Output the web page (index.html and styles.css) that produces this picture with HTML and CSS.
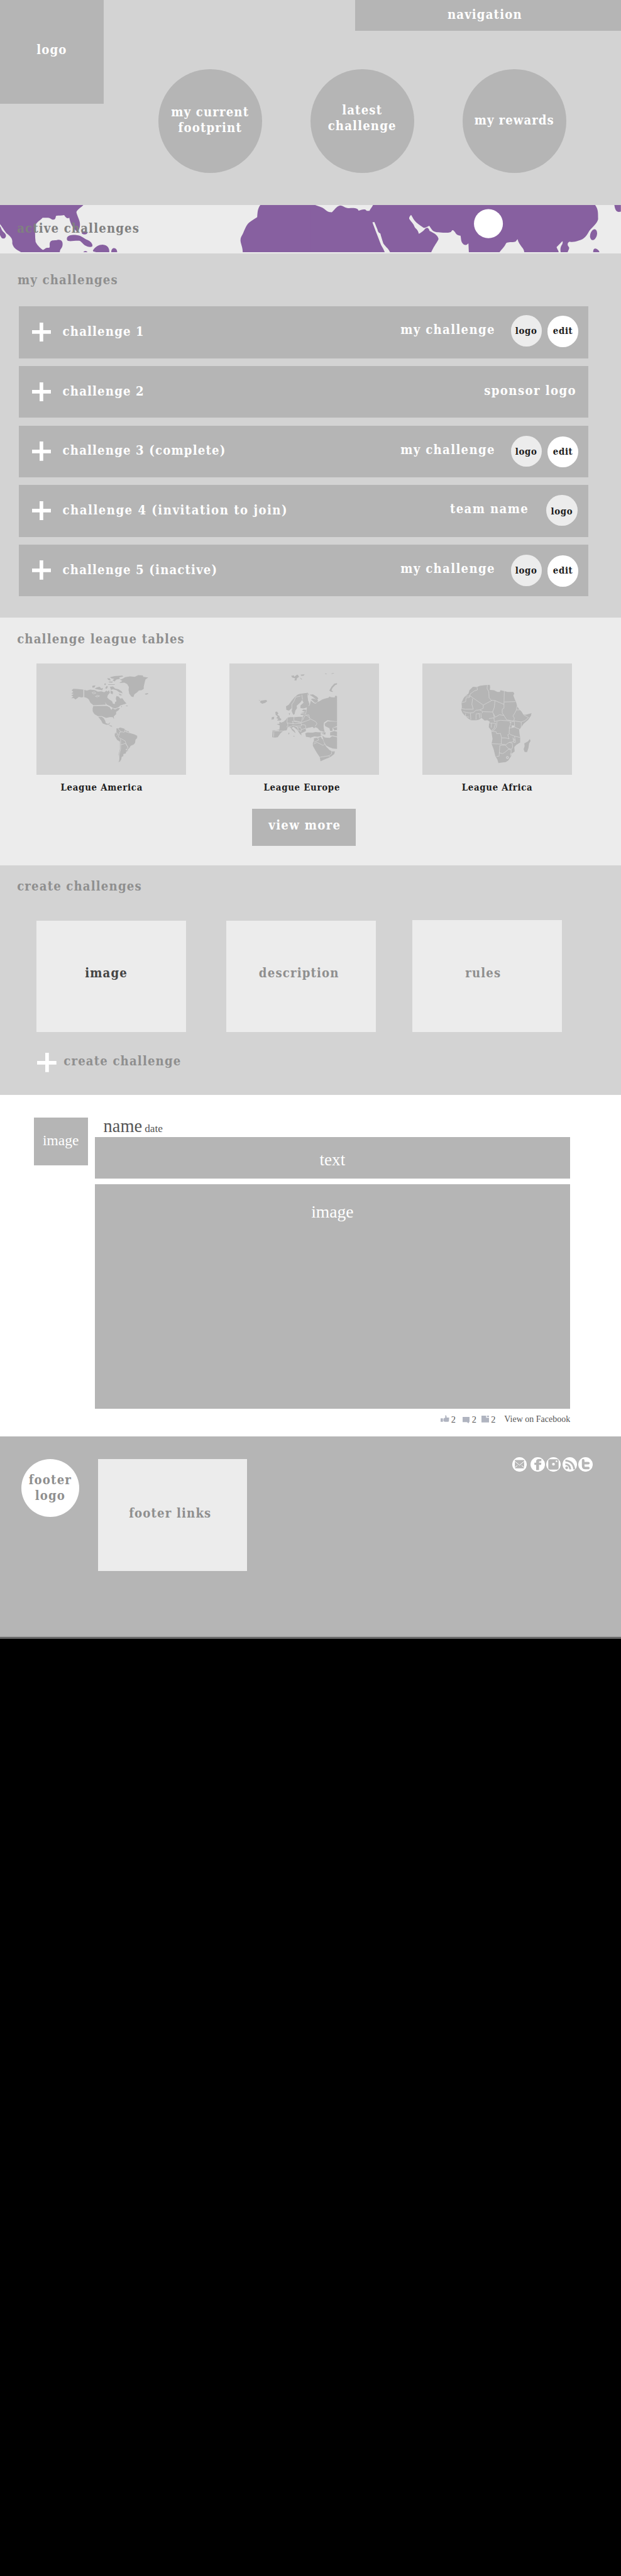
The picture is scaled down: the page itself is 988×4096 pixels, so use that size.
FILE: index.html
```html
<!DOCTYPE html>
<html lang="en">
<head>
<meta charset="utf-8">
<title>my challenges</title>
<link rel="stylesheet" href="styles.css">
</head>
<body>
<header class="hero">
  <div class="hero-top">
    <div class="logo">logo</div>
    <nav class="nav">navigation</nav>
  </div>
  <div class="circles">
    <div class="circle">my current<br>footprint</div>
    <div class="circle up">latest<br>challenge</div>
    <div class="circle tight">my rewards</div>
  </div>
</header>

<section class="band">
  <svg class="world" viewBox="0 0 1200 94" preserveAspectRatio="none">
    <g fill="#8760a0">
      <g transform="scale(.38265 .33333) translate(0 -48)">
        <path d="M0,48L421,48C410,62 387,76 386,90C388,108 404,135 404,160C404,185 395,205 385,198C370,185 354,155 350,122C340,128 333,122 324,106C312,110 295,107 283,111C280,122 281,132 270,133C258,134 255,122 243,122L215,122C208,135 178,148 177,175C178,200 176,230 180,262C190,285 208,302 216,308C224,308 230,294 240,296C256,298 250,288 251,270C256,245 272,256 290,250C312,246 318,262 316,280C314,300 303,300 302,321L106,321C85,306 68,300 62,270C65,240 52,230 32,211C22,195 8,170 0,158Z"/>
        <path d="M0,170C6,178 6,190 14,200C22,210 31,215 30,228C28,240 20,244 14,242C6,240 4,230 0,222Z"/>
        <path d="M338,240C340,222 370,220 385,222C415,225 425,245 445,252C462,262 470,278 466,288C455,296 440,288 428,281C415,270 408,256 400,255C385,253 365,258 350,257C340,256 336,250 338,240Z"/>
        <path d="M470,310C482,290 500,278 518,278C545,280 553,300 552,321L486,321C478,318 466,318 470,310ZM562,321C562,304 570,298 576,298C586,298 592,310 592,321ZM421,321C425,313 438,313 442,321Z"/>
        <ellipse cx="427" cy="209" rx="14" ry="9"/>
        <path d="M1572,48L1315,48C1300,70 1301,95 1299,118C1285,130 1258,145 1250,160C1238,178 1230,210 1224,220C1218,232 1214,240 1215,258C1218,280 1226,295 1226,321L1572,321Z"/>
      </g>
      <g transform="translate(600 0) scale(.38265 .33333) translate(0 -48)">
        <path d="M0,48L24,48C40,55 60,60 75,75C88,90 100,88 108,90C120,80 130,55 150,51C168,52 175,68 195,66C220,64 240,64 243,81C255,76 278,66 284,82L298,82C303,70 312,58 316,48L1438,48C1455,75 1452,95 1453,130C1448,155 1425,175 1408,198C1395,225 1385,245 1355,254C1335,262 1320,264 1309,260C1296,264 1297,285 1305,290C1310,300 1303,308 1299,321L1264,321C1260,300 1265,285 1272,275C1276,262 1274,256 1270,260L1243,292C1246,302 1252,310 1254,321L1080,321C1078,295 1055,285 1046,246C1040,252 1040,262 1028,262C1010,264 993,262 988,270C980,290 965,305 955,321L800,321L798,270C790,278 785,282 775,278C758,262 762,245 758,226C740,224 735,215 730,205C724,196 718,188 712,200C708,210 690,208 670,208C645,206 628,208 617,196C610,185 604,175 600,168C592,172 580,182 572,180C550,164 528,145 520,128C514,115 511,108 508,105C502,112 497,120 499,128C508,145 520,155 525,172C526,182 545,190 547,215C555,212 570,200 580,185C590,175 597,180 602,198C625,210 645,225 647,245C642,262 635,265 610,321L402,321C395,300 375,285 368,270C362,250 357,230 353,213C340,205 340,195 338,188C330,165 326,155 323,146L313,148C320,170 340,230 357,280C365,295 370,305 375,321L0,321Z"/>
        <ellipse cx="1430" cy="220" rx="17" ry="32" transform="rotate(12 1430 220)"/>
        <path d="M1428,321C1428,300 1436,298 1445,302C1455,308 1458,315 1460,321ZM1535,48C1538,75 1545,88 1558,88L1568,86V48Z"/>
      </g>
    </g>
    <circle cx="944" cy="36" r="28" fill="#fff"/>
  </svg>
  <h2 class="heading band-title">active challenges</h2>
</section>

<section class="mine">
  <h2 class="heading">my challenges</h2>
  <div class="rows">
    <div class="row r1">
      <i class="plus"></i><span class="name">challenge 1</span>
      <span class="owner">my challenge</span><b class="dot">logo</b><b class="dot edit">edit</b>
    </div>
    <div class="row r2">
      <i class="plus"></i><span class="name">challenge 2</span>
      <span class="sponsor">sponsor logo</span>
    </div>
    <div class="row r3">
      <i class="plus"></i><span class="name">challenge 3 (complete)</span>
      <span class="owner">my challenge</span><b class="dot">logo</b><b class="dot edit">edit</b>
    </div>
    <div class="row r4">
      <i class="plus"></i><span class="name">challenge 4 (invitation to join)</span>
      <span class="team">team name</span><b class="dot">logo</b>
    </div>
    <div class="row r5">
      <i class="plus"></i><span class="name">challenge 5 (inactive)</span>
      <span class="owner">my challenge</span><b class="dot">logo</b><b class="dot edit">edit</b>
    </div>
  </div>
</section>

<section class="leagues">
  <h2 class="heading">challenge league tables</h2>
  <div class="league-grid">
    <figure class="league america">
      <svg class="map" viewBox="-180 3 867 648" preserveAspectRatio="none">
        <g fill="#b5b5b5">
          <path d="M24,158L34,150L56,151L92,154L92,198L80,200L66,196L54,206L46,212L36,203L22,204L34,194L22,188L36,180L22,176L34,168Z"/>
          <path d="M97,156L112,160L132,154L160,158L176,166L196,164L214,170L226,160L232,166L240,158L246,172L234,186L230,200L240,210L258,222L264,236L274,238L276,226L284,222L280,206L284,192L296,194L306,206L318,204L330,222L342,234L326,240L306,246L296,256L276,264L262,260L246,250L226,240L218,226L222,242L150,244L134,232L122,210L110,202L97,198Z"/>
          <path d="M150,249L228,249L244,256L254,272L262,262L276,270L290,262L304,262L296,274L282,284L282,296L268,310L270,326L262,314L246,314L224,318L212,314L200,308L176,308L156,296L146,280L146,262Z"/>
          <path d="M178,312L198,312L210,320L218,334L222,348L236,354L248,344L242,356L226,358L204,350L194,332Z"/>
          <path d="M318,92L334,82L362,78L390,80L410,70L436,72L440,80L468,84L452,96L446,120L442,138L442,150L430,158L414,160L404,170L388,182L382,198L370,194L358,178L354,156L356,140L346,122L330,114L300,116L318,104L304,96Z"/>
          <path d="M246,82L274,76L318,73L324,78L300,84L304,92L284,96L272,108L262,100L272,92L256,90ZM230,88L246,90L250,102L236,98ZM144,132L162,130L156,142L144,142ZM168,142L186,138L196,148L206,144L202,158L182,154L158,150ZM214,120L222,118L222,128L214,128ZM228,132L234,138L228,150L218,146ZM246,138L264,136L276,148L296,152L314,164L320,176L300,170L284,158L264,152L252,156ZM250,160L264,166L262,182L250,176ZM296,176L318,186L304,188ZM236,123H274V127H236ZM240,108L264,108L258,114L240,112ZM448,178L466,174L468,180L454,184ZM310,250L316,250L314,258ZM338,246L350,247L348,251L340,250Z"/>
          <path d="M236,356L246,362L254,362L260,370L254,368L244,364Z"/>
          <path d="M284,378L296,380L304,374L328,380L338,390L354,396L360,406L388,414L404,422L404,434L394,446L392,462L384,472L366,480L358,494L350,500L350,510L340,514L338,524L324,528L324,540L314,544L312,558L304,572L296,574L300,552L296,530L304,500L304,456L288,446L274,422L274,408L284,400Z"/>
        </g>
        <g fill="none" stroke="#d3d3d3" stroke-width="3">
          <path d="M142,172l14,-5l8,8l-14,4zM162,194l10,-6l14,3l-14,6zM274,408l12,-4l8,10l-10,6M294,382l14,14l4,6M300,402l14,-4l12,4l8,-6l26,10M304,402l-10,26l10,8l10,4l20,12l8,22l8,12l2,6M308,440v60l-8,30l-2,40M308,474l16,-4l12,-4l14,22l-10,18M338,500l12,8M334,386l-4,14M346,390l-2,12"/>
        </g>
      </svg>
      <figcaption>League America</figcaption>
    </figure>
    <figure class="league europe">
      <svg class="map" viewBox="-168 3 867 648" preserveAspectRatio="none">
        <g fill="#b5b5b5">
          <path d="M8,226L16,218L46,214L51,223L38,232L22,236ZM0,215h10v4zM190,74L206,72L208,80L220,70L228,68L236,80L224,88L220,102L208,100L214,90L196,84ZM244,68L268,66L262,74L248,74ZM240,84L254,94L248,96ZM456,117L440,120L424,138L411,160L420,166L434,168L424,158L430,144L446,128L456,124Z"/>
          <path d="M456,192L446,190L442,200L420,198L412,194L406,202L386,206L370,212L354,222L342,226L346,214L328,206L318,198L306,190L296,184L316,182L340,196L348,206L340,212L316,206L304,210L316,220L328,232L344,226L330,236L318,230L304,218L298,244L282,256L278,276L274,270L260,270L252,276L272,284L248,290L244,300L264,304L256,312L236,312L212,314L186,314L168,316L158,330L146,340L132,346L122,340L122,352L106,354L124,362L122,386L100,390L82,390L80,430L96,432L112,430L128,408L146,392L164,390L170,372L184,372L196,390L216,408L210,392L192,376L204,370L226,388L240,410L250,420L248,408L264,400L276,394L274,380L288,376L300,374L314,370L322,378L332,372L344,378L356,392L384,400L380,382L378,364L380,346L400,332L424,336L456,338Z"/>
          <path d="M160,252L176,242L192,220L210,198L232,182L252,178L284,174L292,180L286,194L290,220L296,240L286,256L262,264L244,262L244,246L262,230L254,214L244,228L222,248L224,262L214,276L210,296L202,300L194,282L192,262L178,276L162,272Z"/>
          <path d="M98,284L108,282L116,292L110,300L122,308L124,318L134,326L128,334L108,334L116,324L104,320L112,310L100,300ZM78,314L92,312L90,326L76,328ZM176,292L184,290L180,304Z"/>
          <path d="M272,408L286,402L314,404L330,400L360,402L366,422L344,428L324,426L304,432L276,428ZM322,436L348,432L362,428L374,444L384,470L394,486L414,506L430,512L444,512L440,528L416,546L386,558L360,570L356,546L336,516L316,480L316,462L322,452Z"/>
          <path d="M370,420L386,432L414,434L428,424L456,430L456,498L432,496L410,488L392,478L380,456ZM384,352L402,338L456,340L456,366L430,376L430,394L416,394L412,378L392,368L386,366ZM416,402L440,394L456,398V426L432,420L416,420ZM432,376L456,372V388L440,390ZM356,398l14,4l20,0l-2,14l-16,-4z"/>
          <path d="M174,404l6,2l-2,8l-4,-2zM200,422l12,2l-6,4zM244,432l10,2M300,432l6,2l-6,2z"/>
        </g>
        <path fill="#d3d3d3" d="M276,396L288,380L302,376L318,382L334,380L326,386L344,394L356,400L330,400L300,402L284,402Z"/>
        <path fill="none" stroke="#d3d3d3" stroke-width="3" d="M244,192L216,198L206,222L194,240L194,272M252,184L256,212M286,180L290,220M206,312L206,334L250,344L256,312M168,316L166,344L172,360L164,372M166,348L204,352L196,338L226,342L250,346L300,328M196,352L216,352L248,350L250,364L222,366L196,362M214,366L230,376L244,372L250,388L244,400M250,356L272,360L276,378L248,386M258,330L268,306L292,300L298,322L332,340L340,352L328,368M278,276L274,296L244,292M276,300L300,322M84,394L144,394M90,400L88,428M120,392L98,390M170,372L194,366M226,370L232,392L250,394M340,430L350,446L322,460M320,470L340,460L376,478L384,470M346,428L350,436M362,424L370,440M358,546L408,538L424,528L426,508L436,500M408,538L416,546M366,402L362,420M360,402L378,410"/>
        <path fill="none" stroke="#b5b5b5" stroke-width="3" d="M222,188l22,-8l20,-2l24,-4M386,62l10,1M424,62l14,-3"/>
      </svg>
      <figcaption>League Europe</figcaption>
    </figure>
    <figure class="league africa">
      <svg class="map" viewBox="-129 3 867 648" preserveAspectRatio="none">
        <path fill="#b5b5b5" d="M164,138L186,140L204,132L230,129L262,127L264,140L262,156L286,158L306,168L320,168L324,158L344,162L366,168L398,168L404,178L398,188L410,218L416,232L420,250L432,268L446,282L456,298L470,300L504,291L500,306L484,330L458,352L444,372L432,388L434,408L438,432L438,460L414,476L404,488L406,512L390,524L386,540L368,566L354,574L312,580L306,560L294,540L284,500L272,468L278,440L272,404L270,390L256,372L258,348L262,340L248,332L232,334L214,318L200,328L184,332L152,332L134,320L116,304L104,290L96,272L100,256L98,230L110,204L120,192L138,178L144,158Z"/>
        <path fill="#b5b5b5" d="M494,440L498,452L490,466L486,492L478,516L464,516L458,500L464,482L462,466L484,454Z"/>
        <path fill="none" stroke="#d3d3d3" stroke-width="3" d="M188,140L190,156L172,162L148,180L146,192L120,192M146,192L144,200L124,202L122,224L98,230M144,188L224,244L272,218L258,202L256,166L246,148L248,128M162,206L158,240L166,268L120,268L98,264M224,244L224,262L204,272L182,274L166,288L142,290L108,282M204,272L222,282L278,284L288,258L292,218L272,216M292,218L344,240L346,162M346,226L410,224M344,240L344,262L334,268L334,290L344,304L318,300L294,314L284,296L278,284M344,304L360,330L402,336L404,318L396,308L408,288L416,272L436,272M416,272L420,250M458,300L486,316L466,334L444,342L404,336M444,342L444,372L440,386L406,372L404,338M286,318L288,340L304,336L324,332L380,336L384,350L376,372L374,408L384,416L406,424L438,432M256,348L296,350L286,380L272,392M304,340L300,372L284,392L272,396L298,398L302,410L324,408L330,434L352,434L374,440L366,416L374,412M330,434L328,470L272,468M328,470L354,474L374,460L392,458L408,446L406,424M396,432L402,462L410,460L410,446L398,440M350,474L370,496L388,500L394,488L392,464L374,460M350,476L320,478L316,540L300,542M316,520L336,526L352,516L370,500L386,504L384,540M272,348L270,374M182,300L182,328M200,294L204,320M210,290L212,316M218,290L220,282M150,292L152,330M122,292L120,310L142,314M180,296L204,292M284,296L288,318L258,322M376,346L392,340L404,338M372,376l14,0l18,-6"/>
        <path fill="#d3d3d3" d="M388,362l14,0l2,10l-14,4z"/>
        <circle cx="364" cy="548" r="6" fill="none" stroke="#e4e4e4" stroke-width="3"/>
        <circle cx="385" cy="528" r="4" fill="none" stroke="#d3d3d3" stroke-width="3"/>
      </svg>
      <figcaption>League Africa</figcaption>
    </figure>
  </div>
  <button class="more">view more</button>
</section>

<section class="create">
  <h2 class="heading">create challenges</h2>
  <div class="create-grid">
    <div class="panel dark">image</div>
    <div class="panel desc">description</div>
    <div class="panel rules">rules</div>
  </div>
  <div class="create-link"><i class="plus"></i><span>create challenge</span></div>
</section>

<section class="feed">
  <div class="avatar">image</div>
  <article class="post">
    <div class="byline"><span class="author">name</span><span class="date">date</span></div>
    <div class="post-text">text</div>
    <div class="post-image">image</div>
    <div class="post-meta">
      <svg class="like" viewBox="0 0 17 14"><path fill="#b0b4c0" d="M0 6.5h4.5V13H0zM5.5 7L9 5V1.5Q9-.5 10.500 .5Q12 2 11.500 5H16.500L16 12.500L14 13H8L5.500 12z"/></svg><span class="n1">2</span>
      <svg class="talk" viewBox="0 0 14 13"><path fill="#b0b4c0" d="M0 0h14v10h-2v3L8.500 10H0z"/></svg><span class="n2">2</span>
      <svg class="share" viewBox="0 0 15 13"><path fill="#b0b4c0" d="M0 0h9v4h6v9H0zM10.500 0H15v2.500h-4.500z"/></svg><span class="n3">2</span>
      <a class="fb">View on Facebook</a>
    </div>
  </article>
</section>

<footer class="footer">
  <div class="footer-logo">footer<br>logo</div>
  <div class="footer-links">footer links</div>
  <div class="social">
    <svg viewBox="0 0 28 28"><circle cx="14" cy="14" r="14" fill="#fff"/><rect x="5" y="5.500" width="18" height="16" rx="1" fill="#b5b5b5"/><path d="M5 8l9 7.500L23 8M5 20l5-4M23 20l-5-4" fill="none" stroke="#fff" stroke-width="1.200"/></svg>
    <svg viewBox="0 0 28 28"><circle cx="14" cy="14" r="14" fill="#fff"/><path fill="#b5b5b5" d="M11 25V15H7.500v-4.500H11V8q0-4.500 5-4.500h5V8h-3q-1.500 0-1.500 1.500v1H21L20.500 15h-4v10z"/></svg>
    <svg viewBox="0 0 28 28"><circle cx="14" cy="14" r="14" fill="#fff"/><rect x="4" y="4" width="20" height="20" rx="3.500" fill="#b5b5b5"/><circle cx="14" cy="13.500" r="2.700" fill="#fff"/><rect x="18.500" y="6.500" width="3" height="3" rx=".5" fill="#fff"/></svg>
    <svg viewBox="0 0 28 28"><circle cx="14" cy="14" r="14" fill="#fff"/><circle cx="8" cy="20.500" r="2.700" fill="#b5b5b5"/><path fill="none" stroke="#b5b5b5" stroke-width="3.600" d="M5.500 13.500Q14.500 14 15 23.500M5.500 6.500Q21.500 8 22.500 23.500"/></svg>
    <svg viewBox="0 0 28 28"><circle cx="14" cy="14" r="14" fill="#fff"/><path fill="none" stroke="#b5b5b5" stroke-width="5" stroke-linecap="round" stroke-linejoin="round" d="M9.500 6v11q0 4 4 4h6M10 11.500h9.500"/></svg>
  </div>
</footer>
<div class="rule"></div>
</body>
</html>
```
FILE: styles.css
```css
/* 1rem stands for ten design pixels */
html { font-size: 8.232px; background: #000; }
* { box-sizing: border-box; }
body {
  margin: 0;
  width: 120rem;
  color: #fff;
  font: bold 2.45rem/3rem "DejaVu Serif Condensed", "DejaVu Serif", serif;
  font-stretch: condensed;
  letter-spacing: .14rem;
  white-space: nowrap;
}
h2, figure { margin: 0; }
svg { display: block; }

.heading { font-size: inherit; line-height: 3rem; color: #8f8f8f; }

/* header */
.hero { height: 39.6rem; background: #d3d3d3; }
.hero-top { display: flex; justify-content: space-between; height: 13.4rem; }
.logo { width: 20rem; height: 20rem; padding-top: 8.16rem; background: #b5b5b5; text-align: center; }
.nav { width: 51.4rem; height: 6rem; padding: 1.36rem 1.2rem 0 0; background: #b5b5b5; text-align: center; }
.circles { display: flex; gap: 9.4rem; padding-left: 30.6rem; }
.circle { width: 20rem; height: 20rem; padding-top: 6.76rem; border-radius: 50%; background: #b5b5b5; text-align: center; }
.circle.up { padding-top: 6.46rem; }
.circle.tight { padding-top: 8.36rem; letter-spacing: .12rem; }

/* world band */
.band { display: grid; height: 9.4rem; background: #ececec; }
.band > * { grid-area: 1 / 1; }
.world { width: 120rem; height: 9.4rem; }
.band-title { position: relative; padding: 3.06rem 0 0 3.3rem; color: #808080; }

/* my challenges */
.mine { height: 70.3rem; padding-top: 3.66rem; background: #d3d3d3; }
.mine .heading { padding-left: 3.4rem; }
.rows { display: flex; flex-direction: column; gap: 1.5rem; padding: 3.54rem 0 0 3.7rem; }
.row { display: flex; align-items: flex-start; width: 110rem; height: 10rem; padding: 0 1.9rem 0 2.5rem; background: #b5b5b5; }
.plus {
  width: 3.7rem; height: 3.7rem; margin-top: 3.1rem; flex: none;
  background: linear-gradient(#fff, #fff) center / 100% .7rem no-repeat, linear-gradient(#fff, #fff) center / .7rem 100% no-repeat;
}
.name { margin: 3.36rem auto 0 2.2rem; }
.r4 .name { letter-spacing: .18rem; }
.owner { margin: 3.16rem 3rem 0 0; letter-spacing: .16rem; }
.r1 .owner { margin-top: 2.96rem; }
.team { margin: 3.16rem 3.4rem 0 0; letter-spacing: .17rem; }
.sponsor { margin: 3.26rem .4rem 0 0; letter-spacing: .17rem; }
.dot { width: 6rem; height: 6rem; margin-top: 2rem; padding-top: 1.55rem; border-radius: 50%; background: #ececec; color: #1c1c1c; font-size: 1.8rem; letter-spacing: .08rem; text-align: center; }
.edit { margin: 2.1rem 0 0 1.1rem; padding-top: 1.45rem; background: #fff; }
.r1 .dot { margin-top: 1.7rem; }
.r1 .edit { margin-top: 1.8rem; }
.r4 .dot { margin: 1.9rem .2rem 0 0; padding-top: 1.65rem; }

/* leagues */
.leagues { height: 47.8rem; padding-top: 2.66rem; background: #ececec; }
.leagues .heading { padding-left: 3.3rem; }
.league-grid { display: flex; gap: 8.45rem; padding: 3.14rem 0 0 7rem; }
.league { width: 28.9rem; height: 28.1rem; font-size: 1.8rem; letter-spacing: .09rem; color: #1c1c1c; text-align: center; }
.map { width: 28.9rem; height: 21.6rem; margin-bottom: .95rem; background: #d3d3d3; }
.america figcaption { padding-right: 3.6rem; }
.europe figcaption { padding-right: .9rem; }
.africa figcaption { padding-right: .1rem; }
.more { display: block; width: 20rem; height: 7.2rem; margin-left: 48.7rem; padding: 0 0 .7rem .4rem; border: 0; background: #b5b5b5; color: #fff; font: inherit; letter-spacing: .16rem; }

/* create */
.create { height: 44.4rem; padding-top: 2.66rem; background: #d3d3d3; }
.create .heading { padding-left: 3.3rem; }
.create-grid { display: flex; gap: 7.8rem; padding: 5.04rem 0 0 7rem; }
.panel { width: 28.9rem; height: 21.6rem; padding: 8.66rem 1.8rem 0 0; background: #ececec; color: #8f8f8f; text-align: center; }
.panel.dark { color: #444; }
.panel.desc { padding-right: .7rem; }
.panel.rules { margin: -.1rem 0 0 -.7rem; padding: 8.76rem 1.5rem 0 0; }
.create-link { display: flex; padding: 4rem 0 0 7.2rem; color: #8f8f8f; }
.create-link .plus { margin-top: 0; }
.create-link span { margin: .1rem 0 0 1.4rem; }

/* feed */
.feed { display: flex; gap: 1.3rem; height: 66rem; padding: 4.4rem 0 0 6.5rem; background: #fff; font-family: "Liberation Serif", serif; font-weight: normal; font-stretch: normal; letter-spacing: 0; }
.avatar { width: 10.5rem; height: 9.2rem; padding-top: 2.9rem; background: #b5b5b5; font-size: 2.85rem; text-align: center; }
.post { width: 91.9rem; color: #555; }
.byline { display: flex; align-items: baseline; gap: .5rem; height: 3.7rem; padding-left: 1.7rem; }
.author { font-size: 3.45rem; line-height: 3.3rem; }
.date { font-size: 2.1rem; }
.post-text { height: 8.1rem; padding-top: 2.9rem; background: #b5b5b5; color: #fff; font-size: 3.3rem; text-align: center; }
.post-image { height: 43.4rem; margin-top: 1.05rem; padding-top: 3.9rem; background: #b5b5b5; color: #fff; font-size: 3.35rem; text-align: center; }
.post-meta { display: flex; align-items: flex-start; height: 3rem; padding: 1rem 0 0 66.9rem; font-size: 1.75rem; line-height: 2rem; }
.like { width: 1.7rem; height: 1.4rem; margin-top: .2rem; }
.talk { width: 1.4rem; height: 1.3rem; margin-top: .5rem; }
.share { width: 1.5rem; height: 1.3rem; margin-top: .3rem; }
.n1 { width: 2.2rem; margin-left: .3rem; }
.n2 { width: 1.8rem; margin-left: .4rem; }
.n3 { width: 1.2rem; margin: .1rem 0 0 .4rem; }
.fb { margin-left: auto; font-size: 1.7rem; }

/* footer */
.footer { display: flex; align-items: flex-start; height: 38.7rem; padding: 4.3rem 0 0 4.1rem; background: #b5b5b5; color: #8f8f8f; text-align: center; }
.footer-logo { width: 11.2rem; height: 11.2rem; padding-top: 2.56rem; border-radius: 50%; background: #fff; }
.footer-links { width: 28.9rem; height: 21.6rem; margin-left: 3.6rem; padding: 9.06rem .9rem 0 0; background: #ececec; }
.social { display: flex; gap: .3rem; margin: -.3rem 0 0 51.2rem; }
.social svg { width: 2.8rem; height: 2.8rem; flex: none; }
.social svg:first-child { margin-right: .4rem; }
.rule { height: .3rem; margin-bottom: 181.2rem; border-bottom: .1rem solid #fff; }
```
